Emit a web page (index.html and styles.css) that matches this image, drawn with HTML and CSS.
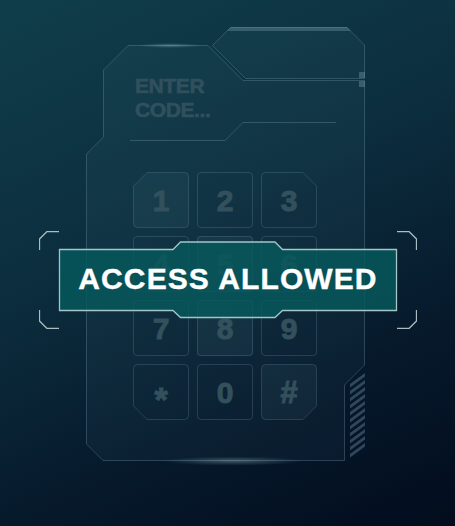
FILE: index.html
```html
<!DOCTYPE html>
<html lang="en">
<head>
<meta charset="utf-8">
<title>Access Allowed</title>
<link rel="stylesheet" href="styles.css">
</head>
<body>
<div class="stage">
  <div class="panel">
    <svg class="frame" width="280" height="434" viewBox="0 0 280 434" aria-hidden="true">
      <defs>
        <radialGradient id="glow">
          <stop offset="0" stop-color="#bfe3ef" stop-opacity="0.3"/>
          <stop offset="1" stop-color="#bfe3ef" stop-opacity="0"/>
        </radialGradient>
      </defs>
      <path class="fill" d="M42,18.5 H122 L157,53.5 H278.5 V338 L258.5,358 V433.5 H17 L0.5,417 V127 L17.5,110 V43 Z"/>
      <path class="fill" d="M126.5,18.5 L144.5,0.5 H261 L278.5,18 V51.5 H159.5 Z"/>
      <path class="line" d="M42,18.5 H122 L157,53.5 H278.5 V338 L258.5,358 V433.5 H17 L0.5,417 V127 L17.5,110 V43 Z"/>
      <path class="line" d="M126.5,18.5 L144.5,0.5 H261 L278.5,18 V51.5 H159.5 Z"/>
      <polygon class="band" points="145,0 261,0 265,4 141,4"/>
      <rect class="nub" x="273" y="45" width="6" height="6"/>
      <rect class="nub" x="273" y="54" width="6" height="6"/>
      <path class="line" d="M44,113.5 H139 L157,95.5 H250"/>
      <g class="stripes">
        <polygon points="264,357 279,346 279,349.5 264,360.5"/>
        <polygon points="264,364 279,353 279,356.5 264,367.5"/>
        <polygon points="264,371 279,360 279,363.5 264,374.5"/>
        <polygon points="264,378 279,367 279,370.5 264,381.5"/>
        <polygon points="264,385 279,374 279,377.5 264,388.5"/>
        <polygon points="264,392 279,381 279,384.5 264,395.5"/>
        <polygon points="264,399 279,388 279,391.5 264,402.5"/>
        <polygon points="264,406 279,395 279,398.5 264,409.5"/>
        <polygon points="264,413 279,402 279,405.5 264,416.5"/>
        <polygon points="264,420 279,409 279,412.5 264,423.5"/>
        <polygon points="264,427 279,416 279,419.5 264,430.5"/>
      </g>
      <ellipse cx="84" cy="18.5" rx="32" ry="2.5" fill="url(#glow)"/>
      <ellipse cx="147" cy="434" rx="70" ry="4.5" fill="url(#glow)"/>
    </svg>

    <div class="prompt">ENTER<br>CODE...</div>

    <div class="keypad">
      <div class="key key-cut key-lit">
        <svg class="key-shape" viewBox="0 0 56 56" aria-hidden="true"><path d="M14,0.5 H51.5 Q55.5,0.5 55.5,4.5 V51.5 Q55.5,55.5 51.5,55.5 H4.5 Q0.5,55.5 0.5,51.5 V14 Z"/></svg>
        <span class="label">1</span>
      </div>
      <div class="key"><span class="label">2</span></div>
      <div class="key key-cut">
        <svg class="key-shape" viewBox="0 0 56 56" aria-hidden="true"><path d="M0.5,4.5 Q0.5,0.5 4.5,0.5 H42 L55.5,14 V51.5 Q55.5,55.5 51.5,55.5 H4.5 Q0.5,55.5 0.5,51.5 Z"/></svg>
        <span class="label">3</span>
      </div>
      <div class="key"><span class="label">4</span></div>
      <div class="key key-lit"><span class="label">5</span></div>
      <div class="key"><span class="label">6</span></div>
      <div class="key"><span class="label">7</span></div>
      <div class="key key-lit"><span class="label">8</span></div>
      <div class="key"><span class="label">9</span></div>
      <div class="key key-cut">
        <svg class="key-shape" viewBox="0 0 56 56" aria-hidden="true"><path d="M0.5,4.5 Q0.5,0.5 4.5,0.5 H51.5 Q55.5,0.5 55.5,4.5 V51.5 Q55.5,55.5 51.5,55.5 H14 L0.5,42 Z"/></svg>
        <span class="label label-star">*</span>
      </div>
      <div class="key"><span class="label">0</span></div>
      <div class="key key-cut key-lit">
        <svg class="key-shape" viewBox="0 0 56 56" aria-hidden="true"><path d="M0.5,4.5 Q0.5,0.5 4.5,0.5 H51.5 Q55.5,0.5 55.5,4.5 V42 L42,55.5 H4.5 Q0.5,55.5 0.5,51.5 Z"/></svg>
        <span class="label label-hash">#</span>
      </div>
    </div>
  </div>

  <div class="banner">
    <svg class="banner-shape" width="378" height="98" viewBox="0 0 378 98" aria-hidden="true">
      <path class="plate" d="M20.5,18.5 H134 L141.5,11 H236 L243.5,18.5 H357.5 V79.5 H243.5 L236,86.5 H141.5 L134,79.5 H20.5 Z"/>
      <path class="bracket" d="M20,0.5 H8 L0.5,8 V19"/>
      <path class="bracket" d="M0.5,79 V90 L8,97.5 H20"/>
      <path class="bracket" d="M358,0.5 H370 L377.5,8 V19"/>
      <path class="bracket" d="M377.5,79 V90 L370,97.5 H358"/>
    </svg>
    <span class="banner-text">ACCESS ALLOWED</span>
  </div>
</div>
</body>
</html>
```

FILE: styles.css
```css
* {
  box-sizing: border-box;
}

html,
body {
  margin: 0;
  padding: 0;
}

body {
  width: 455px;
  height: 526px;
  overflow: hidden;
  background: linear-gradient(155deg, #103e4b 0%, #0c2e3e 40%, #06192b 72%, #020c1d 100%);
  font-family: "Liberation Sans", Arial, sans-serif;
}

.stage {
  position: relative;
  width: 455px;
  height: 526px;
  padding: 27px 0 0 86px;
}

.panel {
  position: relative;
  width: 280px;
  height: 434px;
  padding: 47px 0 0 47px;
}

.frame {
  position: absolute;
  left: 0;
  top: 0;
  overflow: visible;
}

.frame .fill {
  fill: rgba(120, 180, 200, 0.05);
  stroke: none;
}

.frame .line {
  fill: none;
  stroke: rgba(120, 160, 180, 0.32);
  stroke-width: 1;
}

.frame .band {
  fill: rgba(120, 160, 180, 0.34);
}

.frame .nub {
  fill: rgba(120, 160, 180, 0.38);
}

.frame .stripes polygon {
  fill: rgba(110, 140, 165, 0.42);
}

.prompt {
  position: relative;
  margin-left: 2px;
  font-size: 21px;
  line-height: 24px;
  font-weight: 700;
  color: #31505d;
  letter-spacing: -0.4px;
  -webkit-text-stroke: 0.6px #31505d;
}

.keypad {
  position: relative;
  margin-top: 50px;
  display: grid;
  grid-template-columns: repeat(3, 56px);
  grid-auto-rows: 56px;
  gap: 8px;
}

.key {
  position: relative;
  display: flex;
  align-items: center;
  justify-content: center;
  border: 1px solid rgba(120, 160, 180, 0.24);
  border-radius: 4px;
}

.key-lit {
  background: rgba(120, 170, 190, 0.07);
}

.key-cut {
  border: none;
  background: none;
}

.key-shape {
  position: absolute;
  left: 0;
  top: 0;
  width: 56px;
  height: 56px;
}

.key-shape path {
  fill: none;
  stroke: rgba(120, 160, 180, 0.24);
  stroke-width: 1;
}

.key-cut.key-lit .key-shape path {
  fill: rgba(120, 170, 190, 0.07);
}

.label {
  position: relative;
  font-size: 30px;
  font-weight: 700;
  color: #33505d;
  -webkit-text-stroke: 1px #33505d;
  padding-top: 2px;
}

.label-star {
  font-size: 34px;
  padding-top: 14px;
}

.label-hash {
  font-size: 31px;
}

.banner {
  position: absolute;
  left: 39px;
  top: 231px;
  width: 378px;
  height: 98px;
  display: flex;
  align-items: center;
  justify-content: center;
  padding-bottom: 2px;
}

.banner-shape {
  position: absolute;
  left: 0;
  top: 0;
}

.banner-shape .plate {
  fill: rgba(6, 88, 92, 0.84);
  stroke: #a3c6c6;
  stroke-width: 1.3;
}

.banner-shape .bracket {
  fill: none;
  stroke: #a9bec2;
  stroke-width: 1.3;
}

.banner-text {
  position: relative;
  color: #ffffff;
  font-size: 30px;
  font-weight: 700;
  letter-spacing: 1.1px;
  -webkit-text-stroke: 0.4px #ffffff;
}
```
